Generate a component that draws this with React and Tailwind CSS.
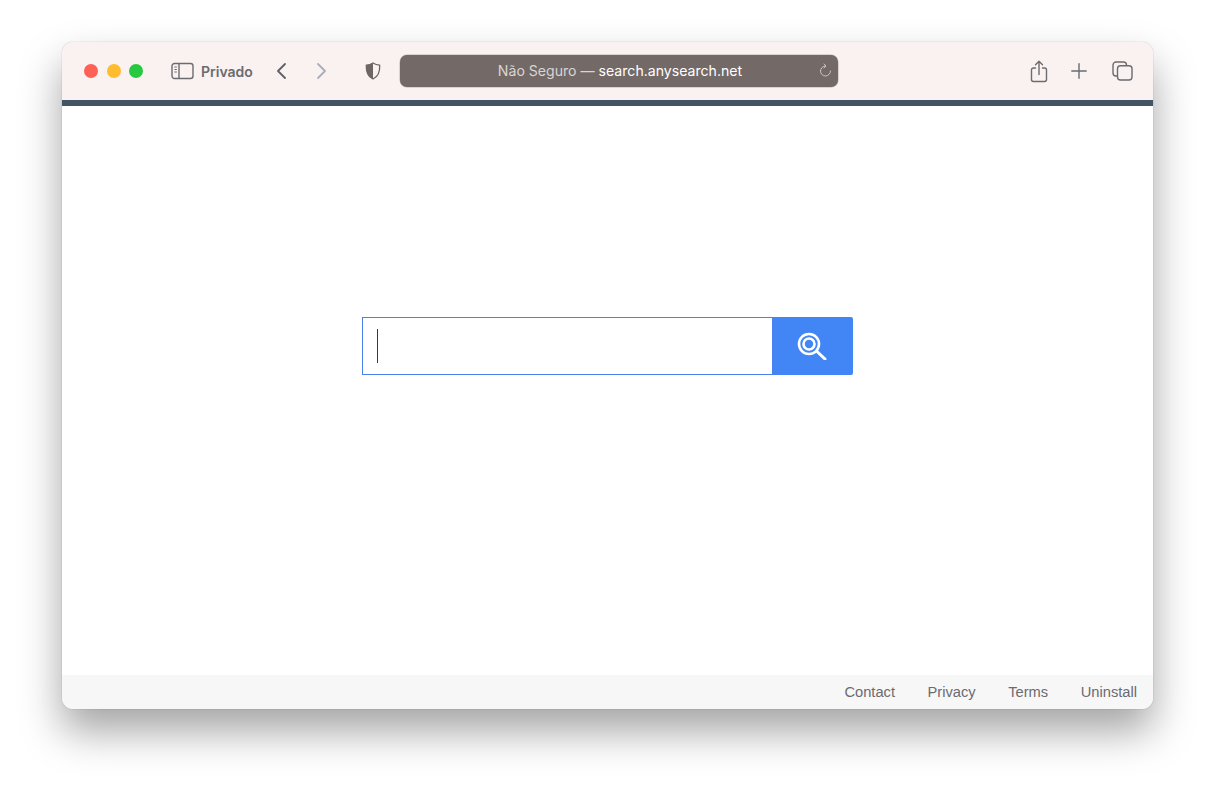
import React from "react";

const SF = "font-['Inter','Liberation_Sans',sans-serif]";

const SidebarIcon = () => (
  <svg width="23" height="18" viewBox="0 0 23 18" fill="none" stroke="#6b6b70" strokeWidth="1.4">
    <rect x="1" y="1.5" width="21" height="15" rx="2.5" />
    <path d="M8 1.5v15" />
    <path d="M3.4 5h2.4M3.4 7.5h2.4M3.4 10h2.4" strokeWidth="1.1" />
  </svg>
);

const Chevron = ({ dir, color }) => (
  <svg width="12" height="18" viewBox="0 0 12 18" fill="none" stroke={color} strokeWidth="1.8" strokeLinecap="round" strokeLinejoin="round">
    <path d={dir === "left" ? "M10 2 3 9l7 7" : "M2 2l7 7-7 7"} />
  </svg>
);

const Shield = () => (
  <svg width="16" height="18" viewBox="0 0 16 18">
    <path d="M8 1C6 2.3 3.8 3 1.3 3.2 1 9.5 2.5 14.5 8 17V1Z" fill="#6e6664" />
    <path d="M8 1c2 1.3 4.2 2 6.7 2.2C15 9.500 13.500 14.500 8 17 2.500 14.500 1 9.500 1.300 3.200 3.800 3 6 2.300 8 1Z" fill="none" stroke="#6e6664" strokeWidth="1.3" strokeLinejoin="round" />
  </svg>
);

const Reload = () => (
  <svg width="14" height="15" viewBox="0 0 14 15" fill="none" stroke="#c9c5c3" strokeWidth="1" strokeLinecap="round" strokeLinejoin="round">
    <path d="M7.500 3a5 5 0 1 0 5 5" />
    <path d="M6 1l2 2-2 2" />
  </svg>
);

const Share = () => (
  <svg width="18" height="23" viewBox="0 0 18 23" fill="none" stroke="#6b6b70" strokeWidth="1.4" strokeLinecap="round" strokeLinejoin="round">
    <path d="M5.500 8H3.500A2 2 0 0 0 1.500 10v9.500a2 2 0 0 0 2 2h11a2 2 0 0 0 2-2V10a2 2 0 0 0-2-2h-2" />
    <path d="M9 14.500V1.500M5.500 4.800 9 1.300l3.500 3.500" />
  </svg>
);

const Plus = () => (
  <svg width="16" height="16" viewBox="0 0 16 16" fill="none" stroke="#6b6b70" strokeWidth="1.4" strokeLinecap="round">
    <path d="M8 .8v14.400M.8 8h14.400" />
  </svg>
);

const Tabs = () => (
  <svg width="21" height="20" viewBox="0 0 21 20" fill="none" stroke="#6b6b70" strokeWidth="1.4">
    <rect x="5.500" y="4.700" width="14.500" height="14.300" rx="3" />
    <path d="M5.500 15H4a3 3 0 0 1-3-3V4a3 3 0 0 1 3-3h7.500a3 3 0 0 1 3 3v.7" />
  </svg>
);

const SearchIcon = () => (
  <svg width="30" height="28" viewBox="0 0 30 28" fill="none" stroke="#fff" strokeLinecap="round">
    <circle cx="12" cy="12" r="10" strokeWidth="2.600" />
    <circle cx="12" cy="12" r="5.500" strokeWidth="2.600" />
    <path d="m19.500 19 8.500 8" strokeWidth="3" />
  </svg>
);

const FOOTER_LINKS = ["Contact", "Privacy", "Terms", "Uninstall"];

export default function App() {
  return (
    <div className="h-[792px] w-[1216px] overflow-hidden bg-white pl-[62px] pt-[42px]">
      <div className="flex h-[667px] w-[1091px] flex-col overflow-hidden rounded-[11px] bg-white shadow-[0_0_1px_rgba(0,0,0,0.45),0_22px_42px_rgba(0,0,0,0.36)]">
        <header className="flex h-[58px] shrink-0 items-center bg-[#faf2f0] pl-[22px]">
          <div className="flex gap-[8.500px]">
            <span className="h-[14px] w-[14px] rounded-full bg-[#fe5f57]" />
            <span className="h-[14px] w-[14px] rounded-full bg-[#febc2e]" />
            <span className="h-[14px] w-[14px] rounded-full bg-[#28c840]" />
          </div>
          <div className="ml-[28px]">
            <SidebarIcon />
          </div>
          <span className={`ml-[7px] w-[54px] whitespace-nowrap text-[14px] font-semibold text-[#6b6b70] ${SF}`}>Privado</span>
          <div className="ml-[20px]">
            <Chevron dir="left" color="#5f5f64" />
          </div>
          <div className="ml-[29px]">
            <Chevron dir="right" color="#a9aeb8" />
          </div>
          <div className="ml-[37px]">
            <Shield />
          </div>
          <div className="relative ml-[19px] flex h-[32px] w-[438px] items-center justify-center rounded-[7px] bg-[#736967] pl-[2px] text-[14.100px] shadow-[0_0_0_0.5px_rgba(120,120,130,0.5)]">
            <span className={`text-[#d9d5d3] ${SF}`}>
              Não Seguro — <span className="text-white">search.anysearch.net</span>
            </span>
            <span className="absolute right-[6px] top-[8px]">
              <Reload />
            </span>
          </div>
          <div className="ml-[192px]">
            <Share />
          </div>
          <div className="ml-[23px]">
            <Plus />
          </div>
          <div className="ml-[25px]">
            <Tabs />
          </div>
        </header>
        <div className="h-[6px] shrink-0 bg-[#435464]" />
        <main className="flex flex-1 justify-center bg-white pt-[211px]">
          <div className="flex h-[58px] w-[491px]">
            <div className="flex w-[411px] items-center border border-[#4a80ec] bg-white pl-[14px]">
              <span className="h-[34px] w-px bg-[#2f3b47]" />
            </div>
            <button type="button" className="flex w-[80px] items-center justify-center rounded-r-[2px] bg-[#4285f4] pr-[3px]">
              <SearchIcon />
            </button>
          </div>
        </main>
        <footer className="flex h-[34px] shrink-0 items-center justify-end gap-[32.500px] bg-[#f8f7f7] pr-4 font-['Liberation_Sans',sans-serif] text-[14.700px] text-[#6b6b72]">
          {FOOTER_LINKS.map((link) => (
            <a key={link}>{link}</a>
          ))}
        </footer>
      </div>
    </div>
  );
}
